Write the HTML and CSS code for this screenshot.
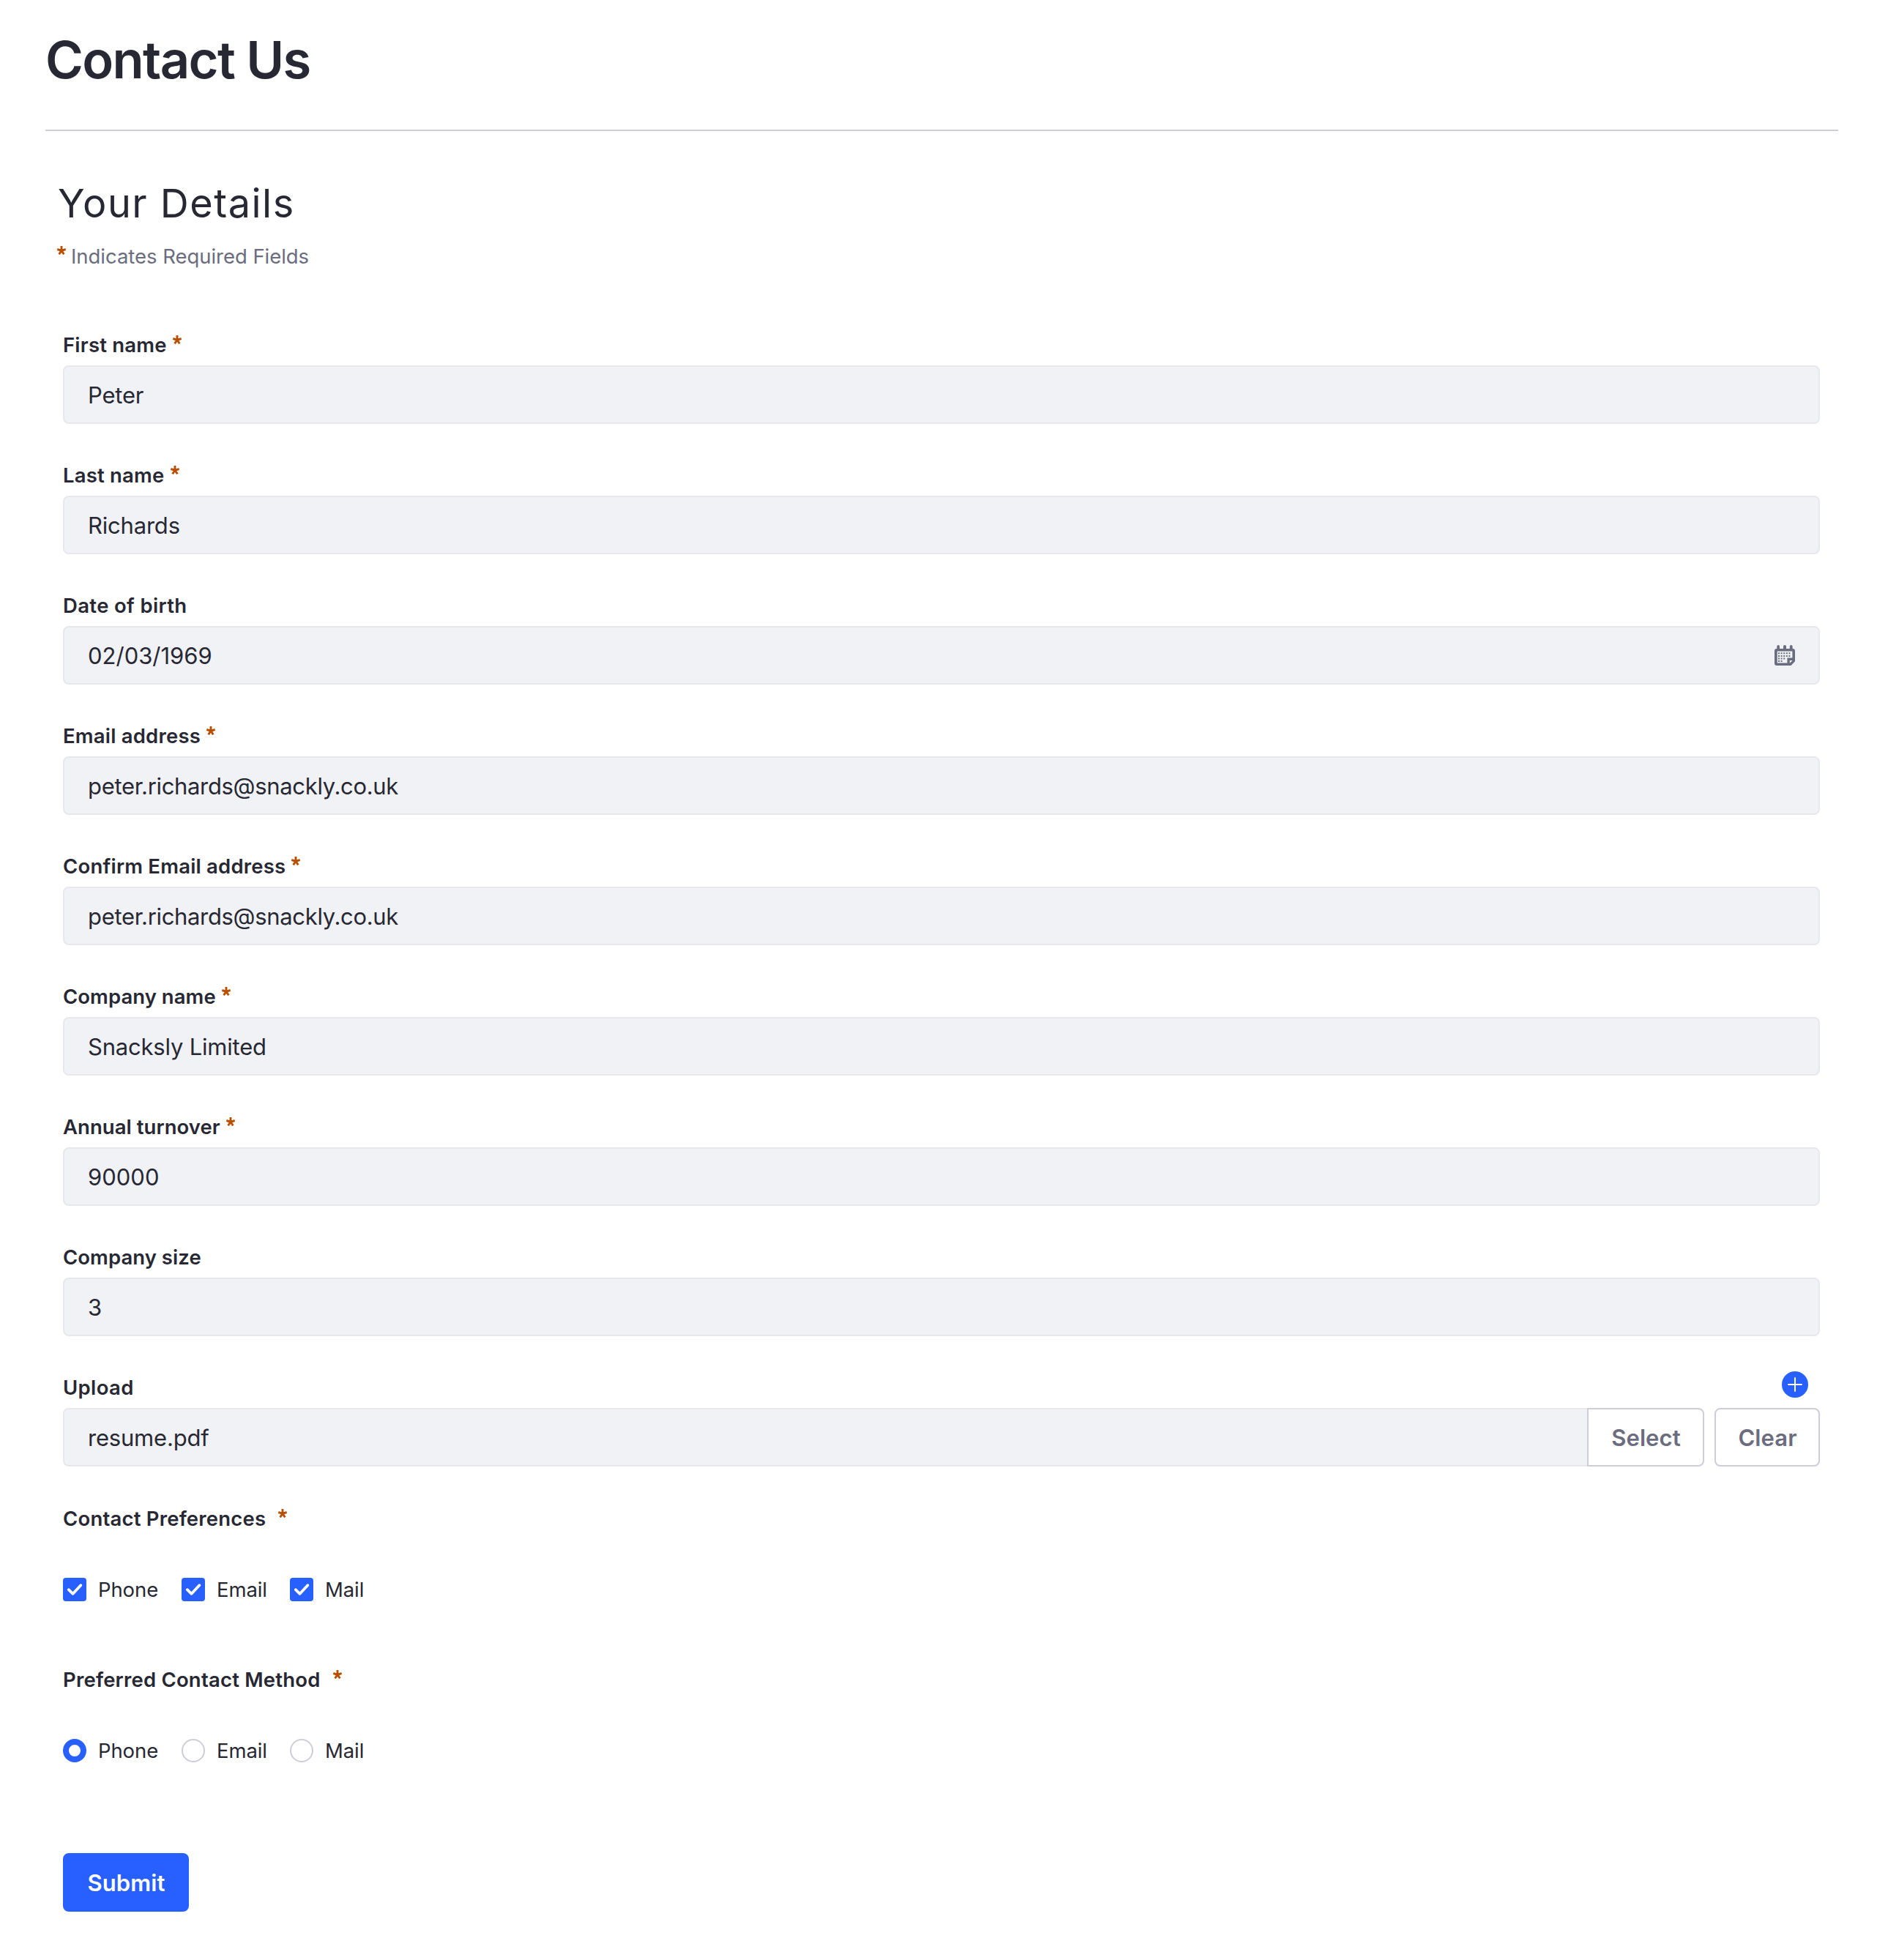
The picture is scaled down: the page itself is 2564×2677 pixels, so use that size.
FILE: index.html
```html
<!DOCTYPE html>
<html lang="en">
<head>
<meta charset="utf-8">
<title>Contact Us</title>
<link rel="stylesheet" href="styles.css">
</head>
<body>
<svg class="sprite" aria-hidden="true">
  <symbol id="asterisk" viewBox="0 0 12 12"><path d="M6 6.4V0M6 6.4L.3 4.5M6 6.4L11.7 4.5M6 6.4L2.6 11.3M6 6.4L9.4 11.3" fill="none" stroke="currentColor" stroke-width="2.9"/></symbol>
  <symbol id="check" viewBox="0 0 32 32"><path d="M7.8 16.2L13.6 21.8L24.3 10.2" fill="none" stroke="#fff" stroke-width="3.8" stroke-linecap="round" stroke-linejoin="round"/></symbol>
</svg>
<main class="page">
  <h1 class="title"><span>Contact Us</span></h1>
  <form class="form">
    <h2 class="subtitle"><span>Your Details</span></h2>
    <p class="hint"><svg class="star"><use href="#asterisk"/></svg><span>Indicates Required Fields</span></p>

    <div class="field"><div class="label"><span>First name</span><svg class="star"><use href="#asterisk"/></svg></div><div class="input"><span>Peter</span></div></div>
    <div class="field"><div class="label"><span>Last name</span><svg class="star"><use href="#asterisk"/></svg></div><div class="input"><span>Richards</span></div></div>
    <div class="field"><div class="label loose"><span>Date of birth</span></div><div class="input number"><span>02/03/1969</span>
      <svg class="calendar" viewBox="0 0 28 28"><path fill="currentColor" fill-rule="evenodd" d="M3.3 5V2a1.85 2 0 0 1 3.7 0V5H12V2a2 2 0 0 1 4 0V5H20.8V2a1.9 2 0 0 1 3.8 0V5A3.2 3.2 0 0 1 28 8.2V22.3L22.5 28H3A3 3 0 0 1 0 25V8A3 3 0 0 1 3.3 5ZM3.7 8.5V24.5H17.4V17.4H24.4V8.5ZM20.8 21V24.7L24.6 21Z"/><path stroke="currentColor" stroke-width="2" stroke-dasharray="2 1.6" d="M5 11.3H21.4M5 14.9H21.4M5 18.4H14.2M5 22H10.6"/></svg></div></div>
    <div class="field"><div class="label"><span>Email address</span><svg class="star"><use href="#asterisk"/></svg></div><div class="input email"><span>peter.richards@snackly.co.uk</span></div></div>
    <div class="field"><div class="label"><span>Confirm Email address</span><svg class="star"><use href="#asterisk"/></svg></div><div class="input email"><span>peter.richards@snackly.co.uk</span></div></div>
    <div class="field"><div class="label snug"><span>Company name</span><svg class="star"><use href="#asterisk"/></svg></div><div class="input"><span>Snacksly Limited</span></div></div>
    <div class="field"><div class="label snug"><span>Annual turnover</span><svg class="star"><use href="#asterisk"/></svg></div><div class="input number"><span>90000</span></div></div>
    <div class="field"><div class="label snug"><span>Company size</span></div><div class="input number"><span>3</span></div></div>
    <div class="field upload">
      <div class="label loose"><span>Upload</span><svg class="add" viewBox="0 0 36 36"><circle cx="18" cy="18" r="18" fill="#2860ff"/><path d="M18 9V27M9 18H27" stroke="#fff" stroke-width="2" stroke-linecap="round"/></svg></div>
      <div class="file"><div class="input"><span>resume.pdf</span></div><button type="button" class="btn select"><span>Select</span></button><button type="button" class="btn clear"><span>Clear</span></button></div>
    </div>

    <div class="group">
      <div class="label wide"><span>Contact Preferences</span><svg class="star"><use href="#asterisk"/></svg></div>
      <div class="options">
        <label class="option first"><svg class="box"><use href="#check"/></svg><span>Phone</span></label>
        <label class="option second"><svg class="box"><use href="#check"/></svg><span>Email</span></label>
        <label class="option"><svg class="box"><use href="#check"/></svg><span>Mail</span></label>
      </div>
    </div>
    <div class="group">
      <div class="label wide"><span>Preferred Contact Method</span><svg class="star"><use href="#asterisk"/></svg></div>
      <div class="options">
        <label class="option first"><i class="radio on"></i><span>Phone</span></label>
        <label class="option second"><i class="radio"></i><span>Email</span></label>
        <label class="option"><i class="radio"></i><span>Mail</span></label>
      </div>
    </div>
    <button type="button" class="submit"><span>Submit</span></button>
  </form>
</main>
</body>
</html>
```

FILE: styles.css
```css
* { box-sizing: border-box; }

body {
  margin: 0;
  background: #fff;
  color: #272833;
  font-family: Inter, "Liberation Sans", sans-serif;
  font-size: 27.5px;
}

.sprite { display: none; }

.page { padding: 40px 53px 0 62px; }

.title {
  display: flex;
  height: 139px;
  margin: 0;
  border-bottom: 2px solid #cdced9;
  font-size: 70.5px;
  font-weight: 600;
  letter-spacing: -1.65px;
  line-height: 84px;
}

.form {
  display: flex;
  flex-direction: column;
  padding: 67px 25px 0 24px;
}

.subtitle {
  margin: 0 0 0 -7px;
  font-size: 54px;
  font-weight: 400;
  letter-spacing: 1.5px;
  line-height: 64px;
}

.hint {
  display: flex;
  gap: 7px;
  margin: 24px 0 89px -8px;
  color: #6b6c7e;
  letter-spacing: -0.04px;
  line-height: 32px;
}

.star {
  flex: none;
  width: 12px;
  height: 12px;
  margin-top: 3px;
  color: #b95000;
}

.hint .star { margin-top: 2px; }

.field { margin-bottom: 54px; }

.upload { margin-bottom: 55px; }

.label {
  display: flex;
  gap: 8px;
  margin-bottom: 12px;
  font-weight: 600;
  letter-spacing: 0.2px;
  line-height: 32px;
}

.snug { letter-spacing: 0.05px; }

.loose { letter-spacing: 0.35px; }

.input {
  display: flex;
  flex: 1;
  align-items: center;
  justify-content: space-between;
  height: 80px;
  padding: 0 32px;
  border: 2px solid #e7e7ed;
  border-radius: 8px;
  background: #f1f2f5;
  font-size: 31px;
  letter-spacing: -0.2px;
  line-height: 40px;
}

.input span { padding-top: 2px; }

.email { letter-spacing: -0.33px; }

.number { letter-spacing: 0; }

.calendar {
  width: 28px;
  height: 28px;
  color: #6b6c7e;
}

.add {
  width: 36px;
  height: 36px;
  margin: -6px 16px -6px auto;
}

.file { display: flex; }

.file .input {
  border-right: 0;
  border-radius: 8px 0 0 8px;
}

.btn {
  height: 80px;
  padding: 2px 0 0 1px;
  border: 2px solid #cdced9;
  border-radius: 8px;
  background: #fff;
  color: #6b6c7e;
  font: 600 31px/40px Inter, "Liberation Sans", sans-serif;
  letter-spacing: 0.1px;
}

.select {
  width: 160px;
  border-radius: 0 8px 8px 0;
}

.clear {
  width: 144px;
  margin-left: 14px;
}

.wide {
  gap: 17px;
  margin-bottom: 65px;
}

.group { margin-bottom: 91px; }

.group + .submit { margin-top: 33px; }

.options { display: flex; }

.option {
  display: flex;
  gap: 16px;
  letter-spacing: -0.1px;
  line-height: 32px;
}

.first { width: 162px; }

.second { width: 148px; }

.box {
  width: 32px;
  height: 32px;
  border-radius: 4px;
  background: #2860ff;
}

.radio {
  width: 32px;
  height: 32px;
  border: 2px solid #cdced9;
  border-radius: 50%;
}

.on { border: 8px solid #2860ff; }

.submit {
  width: 172px;
  height: 80px;
  padding: 2px 0 0 1px;
  border: 0;
  border-radius: 8px;
  background: #2860ff;
  color: #fff;
  font: 600 31px/40px Inter, "Liberation Sans", sans-serif;
  letter-spacing: 0.1px;
}
```
